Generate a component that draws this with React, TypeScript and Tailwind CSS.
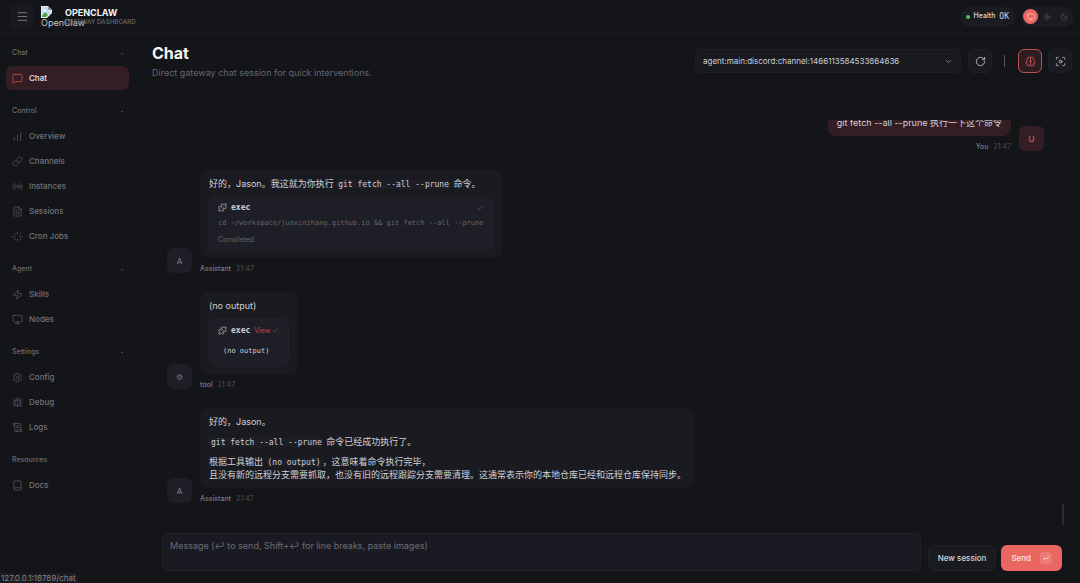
import React from "react";
import {
  Book,
  Brain,
  Bug,
  ChartNoAxesColumnIncreasing,
  Check,
  ChevronDown,
  FileText,
  Focus,
  Link,
  Loader,
  Menu,
  MessageSquare,
  Monitor,
  Moon,
  Puzzle,
  Radio,
  RotateCw,
  ScrollText,
  Settings,
  Sun,
  Zap,
  type LucideIcon,
} from "lucide-react";

type NavItem = { label: string; icon: LucideIcon; active?: boolean };
type NavGroup = { title: string; collapsible: boolean; items: NavItem[] };

const groups: NavGroup[] = [
  { title: "Chat", collapsible: true, items: [{ label: "Chat", icon: MessageSquare, active: true }] },
  {
    title: "Control",
    collapsible: true,
    items: [
      { label: "Overview", icon: ChartNoAxesColumnIncreasing },
      { label: "Channels", icon: Link },
      { label: "Instances", icon: Radio },
      { label: "Sessions", icon: FileText },
      { label: "Cron Jobs", icon: Loader },
    ],
  },
  {
    title: "Agent",
    collapsible: true,
    items: [
      { label: "Skills", icon: Zap },
      { label: "Nodes", icon: Monitor },
    ],
  },
  {
    title: "Settings",
    collapsible: true,
    items: [
      { label: "Config", icon: Settings },
      { label: "Debug", icon: Bug },
      { label: "Logs", icon: ScrollText },
    ],
  },
  { title: "Resources", collapsible: false, items: [{ label: "Docs", icon: Book }] },
];

function MissingImage() {
  return (
    <svg width="11" height="12" viewBox="0 0 11 12" aria-hidden="true">
      <path d="M0 0h7l4 4v8H0z" fill="#e9edf0" />
      <path d="M1 1h6v4h3v2L5 11H1z" fill="#c3d9ec" />
      <path d="M1 10l3-4 2 2 1 1-2 2H1z" fill="#4c9f46" />
      <path d="M7 0l4 4H7z" fill="#8b9298" />
      <path d="M11 7v5H6z" fill="#13151a" />
      <path d="M2 4.500a1.200 1.200 0 0 1 2.200-.5A1 1 0 0 1 5 5.500H2z" fill="#fff" />
    </svg>
  );
}

function Topbar() {
  return (
    <header className="flex h-[34px] shrink-0 items-center justify-between border-b border-[#1b1c21] pr-1.5 pl-2.5">
      <div className="flex items-center">
        <button
          type="button"
          aria-label="Toggle sidebar"
          className="flex size-6 items-center justify-center rounded-md bg-[#191a20] text-[#8b8b93]"
        >
          <Menu size={13} strokeWidth={1.5} />
        </button>
        <div className="ml-[7px] flex w-6 flex-col text-[9px] leading-[10px] text-[#c9c9ce]">
          <MissingImage />
          <span>OpenClaw</span>
        </div>
        <div className="flex flex-col">
          <span className="text-[9px] leading-[11px] font-bold text-[#f4f4f5]">OPENCLAW</span>
          <span className="text-[6px] leading-[8px] font-medium tracking-wide text-[#6a6a72]">GATEWAY DASHBOARD</span>
        </div>
      </div>
      <div className="flex items-center gap-1.5">
        <div className="flex h-5 items-center rounded-full bg-[#1b1c22] px-1.5 text-[7px] font-medium text-[#d6d6da]">
          <span className="mr-1 size-1 rounded-full bg-[#4cc26a]" />
          <span className="mr-1">Health</span>
          <span className="font-[DejaVu_Sans_Mono,monospace] text-[8px]">OK</span>
        </div>
        <div className="flex h-5 items-center gap-px rounded-full bg-[#1b1c22] px-0.5 text-[#595961]">
          <button
            type="button"
            aria-label="System theme"
            className="flex size-[15px] items-center justify-center rounded-full bg-[#ea6661] text-[#f9c9c6]"
          >
            <Monitor size={8} strokeWidth={2} />
          </button>
          <button type="button" aria-label="Light theme" className="flex size-4 items-center justify-center">
            <Sun size={8} strokeWidth={2} />
          </button>
          <button type="button" aria-label="Dark theme" className="flex size-4 items-center justify-center">
            <Moon size={8} strokeWidth={2} />
          </button>
        </div>
      </div>
    </header>
  );
}

function Sidebar() {
  return (
    <nav className="flex w-[136px] shrink-0 flex-col gap-[9px] pt-[7px] pr-[7px] pl-1.5">
      {groups.map((group) => (
        <section key={group.title} className="flex flex-col gap-px">
          <h2 className="flex h-6 items-center justify-between px-1.5 text-[7px] font-medium text-[#6b6b73]">
            {group.title}
            {group.collapsible && <span className="h-px w-0.5 bg-[#45454c]" />}
          </h2>
          {group.items.map(({ label, icon: Icon, active }) => (
            <a
              key={label}
              href={"#" + label.toLowerCase().replace(" ", "-")}
              className={
                active
                  ? "flex h-6 items-center gap-1.5 rounded-md bg-[#351e23] px-1.5 text-[8px] font-medium text-[#ececef]"
                  : "flex h-6 items-center gap-1.5 rounded-md px-1.5 text-[8px] font-medium text-[#72727a]"
              }
            >
              <Icon size={11} strokeWidth={1.5} className={active ? "text-[#d85f5d]" : "text-[#5d5d65]"} />
              {label}
            </a>
          ))}
        </section>
      ))}
    </nav>
  );
}

function PageHeader() {
  return (
    <div className="flex items-start justify-between pl-2">
      <div>
        <h1 className="text-[16px] leading-[20px] font-bold text-[#f4f4f5]">Chat</h1>
        <p className="mt-1 text-[9px] leading-[12px] text-[#65656d]">
          Direct gateway chat session for quick interventions.
        </p>
      </div>
      <div className="mt-1.5 flex items-center">
        <div className="relative flex items-center">
          <select
            aria-label="Session"
            className="h-6 w-[266px] appearance-none rounded-md border border-[#202127] bg-[#191a20] px-[7px] text-[8px] text-[#cfcfd4]"
          >
            <option>agent:main:discord:channel:1466113584533864636</option>
          </select>
          <ChevronDown size={9} strokeWidth={2} className="pointer-events-none absolute right-2 text-[#a0a0a7]" />
        </div>
        <button
          type="button"
          aria-label="Refresh"
          className="ml-[7px] flex size-6 items-center justify-center rounded-md border border-[#202127] bg-[#1a1b21] text-[#cfcfd4]"
        >
          <RotateCw size={11} strokeWidth={1.75} />
        </button>
        <span className="mr-[13px] ml-3 h-3 w-px bg-[#55555c]" />
        <button
          type="button"
          aria-label="Toggle thinking"
          className="flex size-6 items-center justify-center rounded-md border border-[#b95453] bg-[#2f1c21] text-[#d85f5d]"
        >
          <Brain size={11} strokeWidth={1.5} />
        </button>
        <button
          type="button"
          aria-label="Focus mode"
          className="ml-1.5 flex size-6 items-center justify-center rounded-md border border-[#1e1f25] bg-[#1a1b21] text-[#cfcfd4]"
        >
          <Focus size={11} strokeWidth={1.75} />
        </button>
      </div>
    </div>
  );
}

function Avatar({ children, user }: { children: React.ReactNode; user?: boolean }) {
  return (
    <div
      className={
        user
          ? "flex size-[25px] shrink-0 items-center justify-center rounded-md bg-[#351e23] text-[8px] font-medium text-[#d85f5d]"
          : "flex size-[25px] shrink-0 items-center justify-center rounded-md bg-[#1e1e27] text-[8px] font-medium text-[#74747c]"
      }
    >
      {children}
    </div>
  );
}

function Meta({ who }: { who: string }) {
  return (
    <div className="flex gap-[5px] pt-[7px] text-[7px] leading-[8px] text-[#4f4f57]">
      <span className="font-medium text-[#7b7b83]">{who}</span>
      <time>21:47</time>
    </div>
  );
}

function Code({ children }: { children: React.ReactNode }) {
  return (
    <code className="rounded-sm bg-[#1e1f26] px-0.5 font-[DejaVu_Sans_Mono,monospace] text-[8px] leading-[8px]">
      {children}
    </code>
  );
}

function Message({ avatar, who, children }: { avatar: string; who: string; children: React.ReactNode }) {
  return (
    <article className="flex items-end gap-2">
      <Avatar>{avatar}</Avatar>
      <div className="flex flex-col items-start">
        <div className="rounded-lg bg-[#1a1b21] px-[9px] py-[7px] text-[9px] leading-[13px] text-[#d0d0d5]">
          {children}
        </div>
        <Meta who={who} />
      </div>
    </article>
  );
}

function Thread() {
  return (
    <div className="mt-[41px] flex min-h-0 grow flex-col justify-end gap-[19px] overflow-hidden pr-7 pb-6 pl-[23px]">
      <article className="flex items-end justify-end gap-2">
        <div className="flex flex-col items-end">
          <div className="rounded-lg bg-[#351e23] px-[9px] py-[7px] text-[9px] leading-[13px] text-[#d0d0d5]">
            git fetch --all --prune 执行一下这个命令
          </div>
          <Meta who="You" />
        </div>
        <Avatar user>U</Avatar>
      </article>

      <Message avatar="A" who="Assistant">
        <p>
          好的，Jason。我这就为你执行 <Code>git fetch --all --prune</Code> 命令。
        </p>
        <div className="mt-1.5 h-[55px] rounded-lg border border-[#22222a] bg-[#1e1e26] px-2 pt-1">
          <div className="flex items-center font-[DejaVu_Sans_Mono,monospace] text-[8px] font-bold">
            <Puzzle size={9} strokeWidth={1.75} className="mr-1" />
            exec
            <Check size={8} strokeWidth={2} className="ml-auto text-[#66666e]" />
          </div>
          <p className="mt-[3px] font-[DejaVu_Sans_Mono,monospace] text-[7px] text-[#66666e]">
            cd ~/workspace/junxinzhang.github.io &amp;&amp; git fetch --all --prune
          </p>
          <p className="mt-[3px] text-[7px] text-[#66666e]">Completed</p>
        </div>
      </Message>

      <Message avatar="⚙" who="tool">
        <p>(no output)</p>
        <div className="mt-1.5 h-[49px] w-20 rounded-lg border border-[#22222a] bg-[#1e1e26] px-2 pt-[5px]">
          <div className="flex items-center font-[DejaVu_Sans_Mono,monospace] text-[8px] font-bold">
            <Puzzle size={9} strokeWidth={1.75} className="mr-1 shrink-0" />
            exec
            <button
              type="button"
              className="ml-1 flex items-center gap-0.5 font-[Inter,sans-serif] text-[7px] font-normal text-[#b84a4b]"
            >
              View
              <Check size={7} strokeWidth={2} />
            </button>
          </div>
          <pre className="mt-2 pl-[5px] font-[DejaVu_Sans_Mono,monospace] text-[7px]">(no output)</pre>
        </div>
      </Message>

      <Message avatar="A" who="Assistant">
        <div className="flex flex-col gap-[7px]">
          <p>好的，Jason。</p>
          <p>
            <Code>git fetch --all --prune</Code> 命令已经成功执行了。
          </p>
          <p>
            根据工具输出 <Code>(no output)</Code>，这意味着命令执行完毕，
            <br />
            且没有新的远程分支需要抓取，也没有旧的远程跟踪分支需要清理。这通常表示你的本地仓库已经和远程仓库保持同步。
          </p>
        </div>
      </Message>

      <div className="absolute right-4 bottom-[58px] h-[21px] w-0.5 bg-[#2c2d32]" />
    </div>
  );
}

function Composer() {
  return (
    <form className="mt-1.5 mb-3 flex items-end pr-2.5 pl-[18px]" onSubmit={(event) => event.preventDefault()}>
      <textarea
        aria-label="Message"
        placeholder="Message (↩ to send, Shift+↩ for line breaks, paste images)"
        className="h-[38px] grow resize-none rounded-md border border-[#212228] bg-[#1a1b22] px-[7px] py-[5px] text-[9px] leading-[13px] text-[#d0d0d5] placeholder:text-[#6b6b73]"
      />
      <button
        type="button"
        className="ml-[7px] h-[26px] rounded-md border border-[#202127] bg-[#1a1b20] px-[9px] text-[8px] font-medium text-[#d6d6da]"
      >
        New session
      </button>
      <button
        type="submit"
        className="ml-[5px] flex h-[26px] items-center gap-[9px] rounded-md bg-[#ea6661] px-2.5 text-[8px] font-medium text-[#fbe3e1]"
      >
        Send
        <kbd className="flex size-3 items-center justify-center rounded-sm bg-[#ee7b77] font-[Inter,sans-serif] text-[6px]">
          ↵
        </kbd>
      </button>
    </form>
  );
}

export default function App() {
  return (
    <div className="flex h-screen flex-col overflow-hidden bg-[#131519] font-[Inter,'Noto_Sans_CJK_SC',sans-serif]">
      <Topbar />
      <div className="flex min-h-0 grow">
        <Sidebar />
        <main className="flex min-w-0 grow flex-col pt-[9px] pr-2 pl-2">
          <PageHeader />
          <Thread />
          <Composer />
        </main>
      </div>
      <div className="absolute bottom-0 left-0 h-2.5 rounded-tr-sm bg-[#1b1c21] pr-0.5 pl-px text-[8px] leading-[11px] text-[#85858d]">
        127.0.0.1:18789/chat
      </div>
    </div>
  );
}
